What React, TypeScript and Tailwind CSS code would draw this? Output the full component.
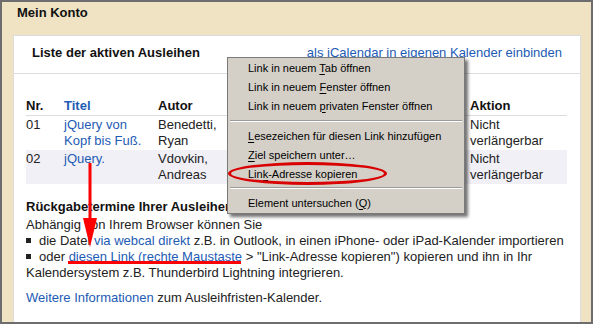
import React from 'react';

const blue = 'text-[#1d5bb4]';

function MenuItem({ before, hot, after }: { before: string; hot: string; after: string }) {
  return (
    <div className="h-[19px] flex items-center pl-[20px]">
      <span className="whitespace-pre">
        {before}
        <span className="underline underline-offset-[2px]">{hot}</span>
        {after}
      </span>
    </div>
  );
}

function MenuSeparator({ h }: { h: string }) {
  return (
    <div className={`${h} flex items-center px-[2px]`}>
      <div className="w-full border-t border-t-[#9a9a9a] border-b border-b-white" />
    </div>
  );
}

function ContextMenu() {
  return (
    <div className="absolute left-[227px] top-[57px] w-[238px] bg-[#d4d0c8] border border-[#7a7a7a] shadow-[3px_3px_3px_rgba(0,0,0,0.55)] text-[11px] text-black font-['Liberation_Sans',Arial,sans-serif] pb-px">
      <MenuItem before="Link in neuem " hot="T" after="ab öffnen" />
      <MenuItem before="Link in neuem " hot="F" after="enster öffnen" />
      <MenuItem before="Link in neuem " hot="p" after="rivaten Fenster öffnen" />
      <MenuSeparator h="h-[11px]" />
      <MenuItem before="" hot="L" after="esezeichen für diesen Link hinzufügen" />
      <MenuItem before="" hot="Z" after="iel speichern unter…" />
      <MenuItem before="Lin" hot="k" after="-Adresse kopieren" />
      <MenuSeparator h="h-[10px]" />
      <MenuItem before="Element untersuchen (" hot="Q" after=")" />
    </div>
  );
}

const rows = [
  { nr: '01', titel: 'jQuery von Kopf bis Fuß.', autor: 'Benedetti, Ryan', bg: 'bg-white' },
  { nr: '02', titel: 'jQuery.', autor: 'Vdovkin, Andreas', bg: 'bg-[#f0f0f6]' },
];

function Bullet() {
  return <span className="inline-block w-[5px] h-[5px] bg-[#222] mr-[8px] mb-[2px] align-middle" />;
}

export default function App() {
  return (
    <div className="relative w-[593px] h-[324px] overflow-hidden font-['Liberation_Sans',Arial,sans-serif] text-[13px] leading-4 text-[#222]">
      <div className="h-full border-2 border-[#6d6d6d] bg-[#efe3c3] flex flex-col pl-[11px] pr-[10px]">
        <div className="h-[33px] pt-[3px] pl-[4px] font-bold text-[#111]">Mein Konto</div>

        <div className="flex-1 bg-white border-t border-x border-[#dcdcdc]">
          <div className="h-[38px] border-b border-[#dddddd] flex justify-between pt-[9px] pl-[18px] pr-[18px]">
            <span className="font-bold text-[#111]">Liste der aktiven Ausleihen</span>
            <span className={blue}>als iCalendar in eigenen Kalender einbinden</span>
          </div>

          <div className="ml-[12px] mr-[13px] mt-[24px]">
            <div className="grid grid-cols-[38px_94px_70px_242px_97px] font-bold text-[#111] border-b border-[#dddddd] pb-px">
              <span>Nr.</span>
              <span className={blue}>Titel</span>
              <span>Autor</span>
              <span />
              <span>Aktion</span>
            </div>
            {rows.map((r) => (
              <div key={r.nr} className={`grid grid-cols-[38px_94px_70px_242px_97px] py-px ${r.bg}`}>
                <span>{r.nr}</span>
                <span className={`${blue} pr-[6px]`}>{r.titel}</span>
                <span className="pr-[6px]">{r.autor}</span>
                <span />
                <span className="pr-[20px]">Nicht verlängerbar</span>
              </div>
            ))}
          </div>

          <div className="ml-[12px] mt-[15px]">
            <div className="font-bold text-[#111]">Rückgabetermine Ihrer Ausleihen</div>
            <p className="mt-[2px] whitespace-nowrap">
              Abhängig von Ihrem Browser können Sie
              <br />
              <Bullet />
              die Datei <span className={blue}>via webcal direkt</span> z.B. in Outlook, in einen iPhone- oder iPad-Kalender importieren
              <br />
              <Bullet />
              oder <span className={blue}>diesen Link (rechte Maustaste</span> &gt; "Link-Adresse kopieren") kopieren und ihn in Ihr
              <br />
              Kalendersystem z.B. Thunderbird Lightning integrieren.
            </p>
            <p className="mt-[9px]">
              <span className={blue}>Weitere Informationen</span> zum Ausleihfristen-Kalender.
            </p>
          </div>
        </div>
      </div>

      <ContextMenu />

      <div className="absolute left-[228px] top-[162px] w-[159px] h-[23px] rounded-[50%] border-[3px] border-[#d90000]" />

      <svg className="absolute left-[80px] top-[160px]" width="20" height="90" viewBox="0 0 20 90">
        <line x1="10" y1="3" x2="10" y2="60" stroke="#ff0000" strokeWidth="3" />
        <polygon points="3,58 17,58 10,87" fill="#ff0000" />
      </svg>

      <div className="absolute left-[68px] top-[261px] w-[173px] h-[3px] bg-[#ff0000]" />
    </div>
  );
}
